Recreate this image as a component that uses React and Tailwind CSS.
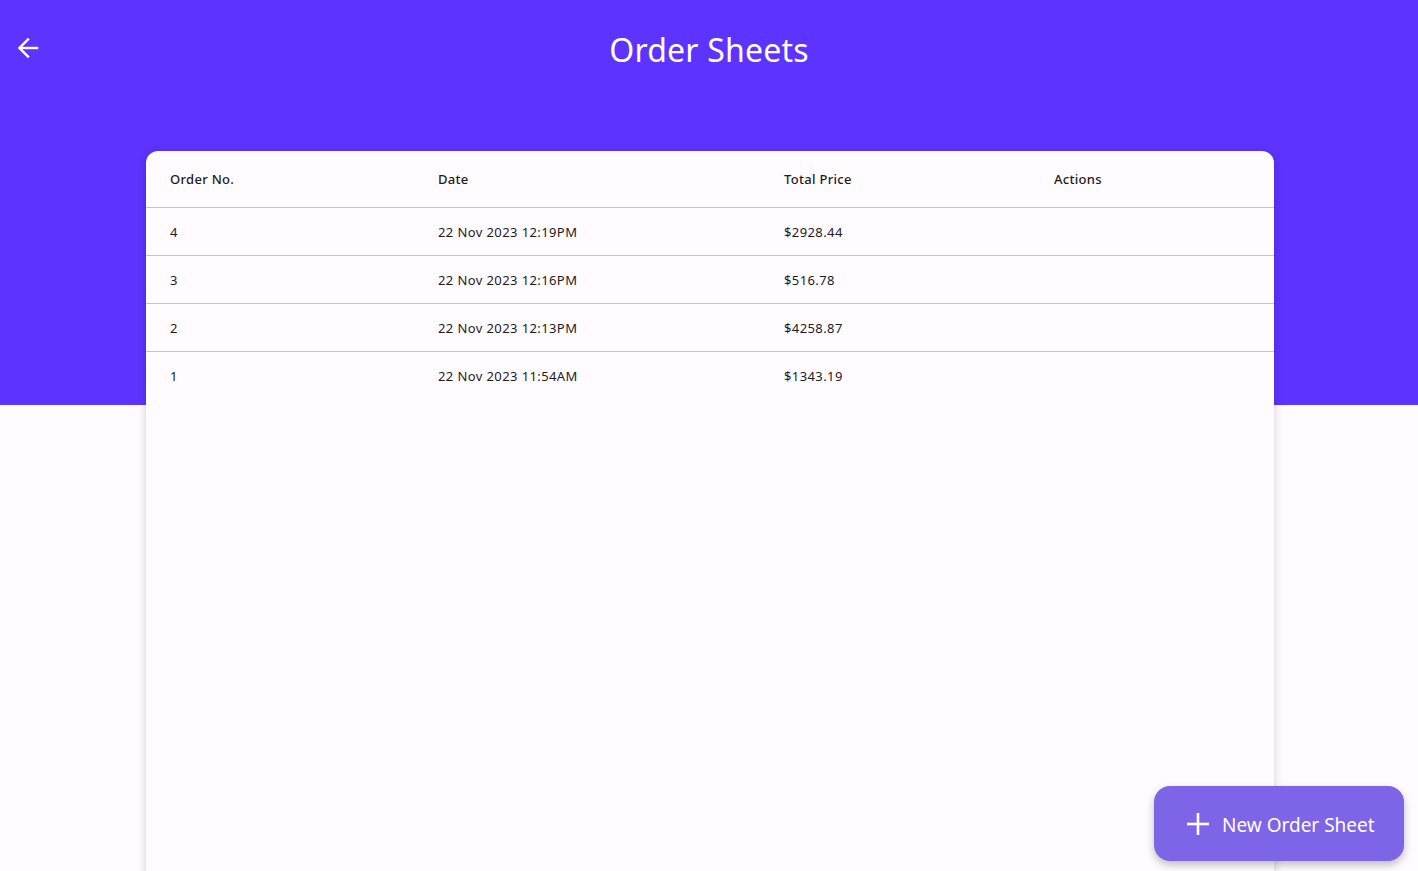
import React from "react";

const rows = [
  ["4", "22 Nov 2023 12:19PM", "$2928.44"],
  ["3", "22 Nov 2023 12:16PM", "$516.78"],
  ["2", "22 Nov 2023 12:13PM", "$4258.87"],
  ["1", "22 Nov 2023 11:54AM", "$1343.19"],
];

export default function App() {
  return (
    <div
      className="relative h-[871px] w-full overflow-hidden bg-[#fffbfe]"
      style={{ fontFamily: '"Noto Sans", "Open Sans", sans-serif' }}
    >
      <div className="h-[405px] bg-[#5c33ff]">
        <div className="relative flex h-[100px] items-start justify-center">
          <button className="absolute left-[16px] top-[36px] text-white">
            <svg width="24" height="24" viewBox="0 0 24 24" fill="none" stroke="white" strokeWidth="2.4" strokeLinecap="square">
              <path d="M21 12H4" />
              <path d="M12 3.5L3.5 12L12 20.5" />
            </svg>
          </button>
          <h1 className="mt-[28px] text-[32px] leading-[44px] tracking-[0.2px] text-white">Order Sheets</h1>
        </div>
      </div>
      <div className="absolute left-[146px] top-[151px] h-[740px] w-[1128px] rounded-[12px] bg-[#fffbfe] shadow-[0_2px_10px_rgba(0,0,0,0.18)]">
        <div className="grid h-[57px] grid-cols-[268px_346px_270px_1fr] items-center border-b border-[#cac4d0] pl-[24px] pt-[2px] text-[13px] font-medium tracking-[0.3px] text-[#1c1b1f]">
          <div>Order No.</div>
          <div>Date</div>
          <div>Total Price</div>
          <div>Actions</div>
        </div>
        {rows.map((r, i) => (
          <div
            key={i}
            className={`grid h-[48px] grid-cols-[268px_346px_270px_1fr] items-center pl-[24px] pt-[2px] text-[13px] tracking-[0.4px] text-[#1c1b1f] ${i < 3 ? "border-b border-[#cac4d0]" : ""}`}
          >
            <div>{r[0]}</div>
            <div>{r[1]}</div>
            <div>{r[2]}</div>
            <div></div>
          </div>
        ))}
      </div>
      <button className="absolute left-[1154px] top-[786px] flex h-[75px] w-[250px] items-center gap-[13px] rounded-[16px] bg-[#7e64e6] pl-[33px] pt-[3px] text-white shadow-[0_4px_8px_rgba(0,0,0,0.25)]">
        <svg width="22" height="22" viewBox="0 0 22 22" fill="none" stroke="white" strokeWidth="2.6" className="-mt-[3px]">
          <path d="M11 0V22" />
          <path d="M0 11H22" />
        </svg>
        <span className="text-[19px]">New Order Sheet</span>
      </button>
    </div>
  );
}
